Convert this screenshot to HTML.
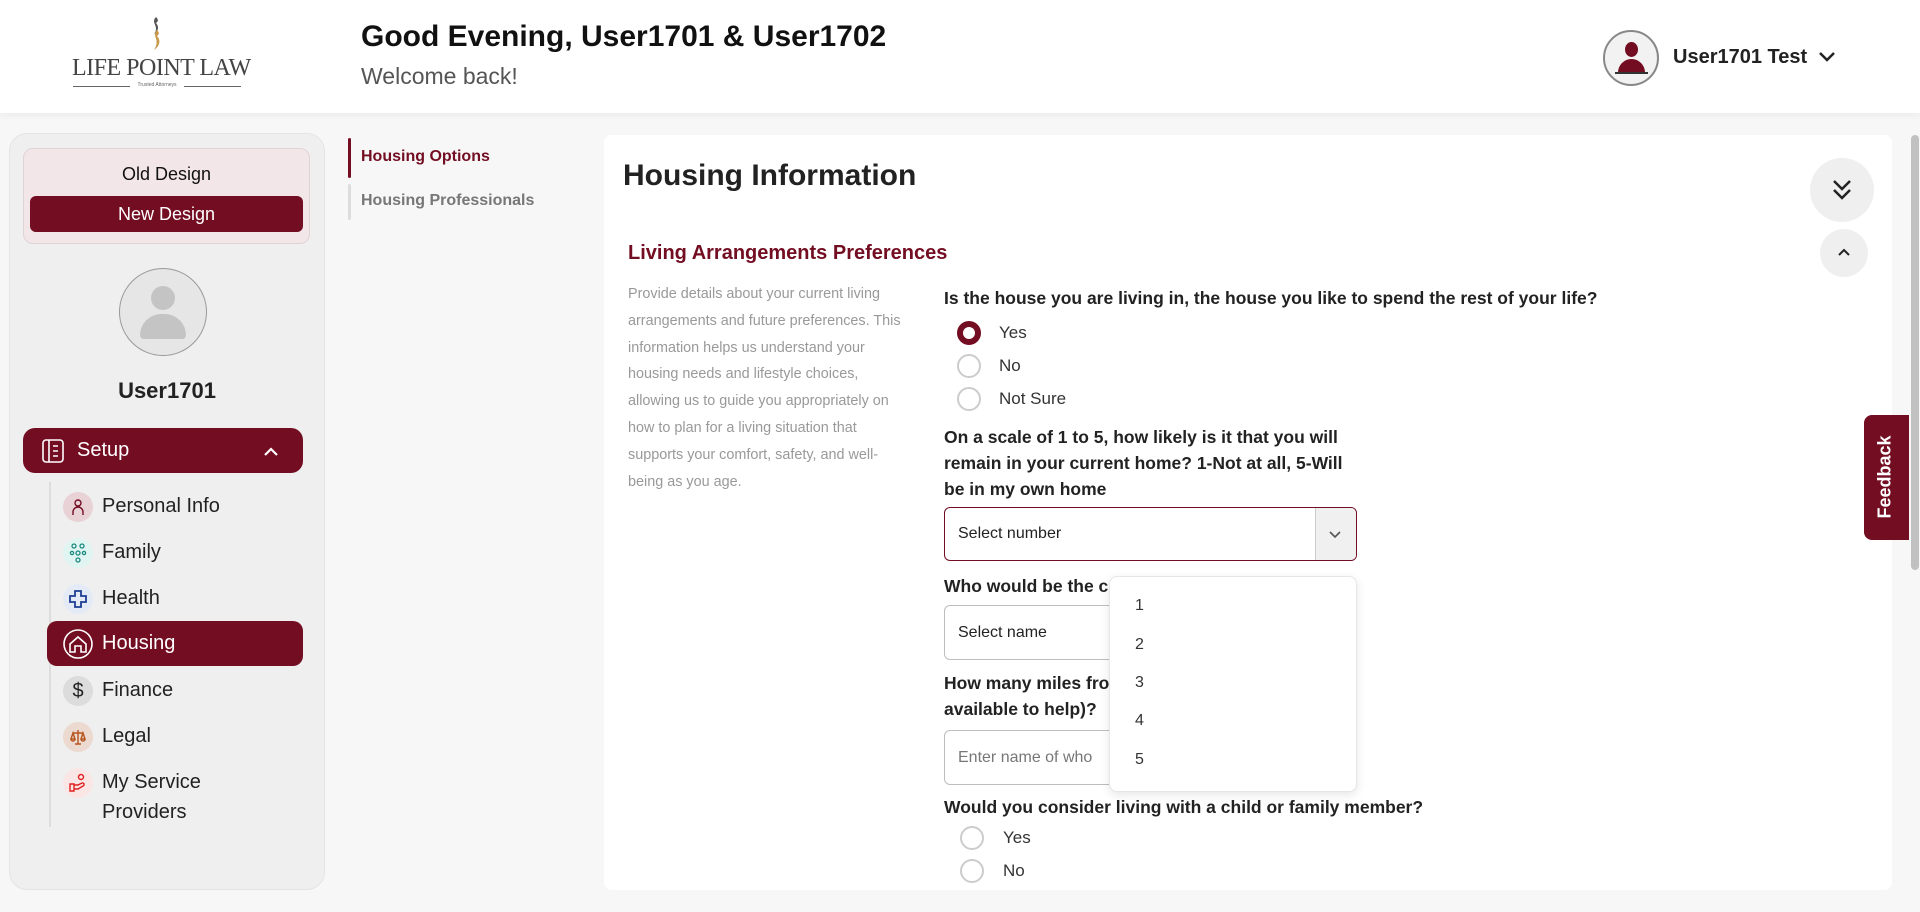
<!DOCTYPE html>
<html><head><meta charset="utf-8"><style>
*{box-sizing:border-box;margin:0;padding:0}
body{width:1920px;height:912px;overflow:hidden;background:#f7f7f7;font-family:"Liberation Sans",Arial,sans-serif;color:#222;position:relative}
.a{position:absolute}
.hdr{left:0;top:0;width:1920px;height:113px;background:#fff;box-shadow:0 2px 8px rgba(0,0,0,.06)}
.side{left:9px;top:133px;width:316px;height:757px;background:#efefef;border:1px solid #e4e4e4;border-radius:18px}
.mi{position:absolute;left:102px;font-size:20px;color:#222}
.ic{position:absolute;left:63px;width:30px;height:30px;border-radius:50%;display:flex;align-items:center;justify-content:center}
.radio{position:absolute;width:24px;height:24px;border-radius:50%;border:2px solid #ccc;background:#fff}
.lbl{position:absolute;font-size:17px;color:#333}
.q{position:absolute;left:944px;font-size:17.5px;font-weight:bold;color:#222;line-height:26px;white-space:nowrap}
.box{position:absolute;left:944px;width:413px;border:1px solid #bdbdbd;border-radius:6px;background:#fff;font-size:16px;padding-left:13px;display:flex;align-items:center}
.opt{position:absolute;left:1135px;font-size:16px;color:#333}
</style></head><body>
<div class="a hdr"></div>
<svg class="a" style="left:140px;top:16px" width="30" height="38" viewBox="0 0 30 38"><path d="M16 1c-6 6 4 9-2 17c5-3 5-8 2-11c3-2 2-4 0-6z" fill="#555"/><path d="M17 14c-6 6 4 9-3 20c6-4 7-10 3-14c3-2 2-4 0-6z" fill="#c89a4a"/></svg>
<div class="a" style="left:72px;top:55px;font-family:'Liberation Serif',serif;font-size:24px;color:#444;letter-spacing:-0.5px">LIFE POINT LAW</div>
<div class="a" style="left:73px;top:86px;width:168px;height:1px;background:#666"></div>
<div class="a" style="left:130px;top:82px;width:54px;height:8px;background:#fff;font-size:5px;color:#666;text-align:center">Trusted Attorneys</div>
<div class="a" style="left:361px;top:20px;font-size:30px;font-weight:bold;color:#111">Good Evening, User1701 &amp; User1702</div>
<div class="a" style="left:361px;top:63px;font-size:23px;color:#555">Welcome back!</div>
<div class="a" style="left:1603px;top:30px;width:56px;height:56px;border-radius:50%;border:2px solid #888;background:#f2f2f2;overflow:hidden"><div class="a" style="left:20px;top:10px;width:13px;height:15px;border-radius:50%;background:#730d22"></div><div class="a" style="left:13px;top:27px;width:27px;height:14px;border-radius:14px 14px 0 0;background:#730d22"></div><div class="a" style="left:10px;top:40px;width:33px;height:2px;background:#333"></div></div>
<div class="a" style="left:1673px;top:46px;font-size:20px;font-weight:bold;color:#222">User1701 Test</div>
<svg class="a" style="left:1817px;top:50px" width="20" height="14" viewBox="0 0 20 14"><path d="M3 3l7 7 7-7" stroke="#222" stroke-width="2.5" fill="none"/></svg>

<div class="a side"></div>
<div class="a" style="left:23px;top:148px;width:287px;height:96px;background:#f3e6e9;border:1px solid #e0d3d6;border-radius:10px"></div>
<div class="a" style="left:23px;top:164px;width:287px;text-align:center;font-size:18px;color:#111">Old Design</div>
<div class="a" style="left:30px;top:196px;width:273px;height:36px;background:#730d22;border-radius:6px;color:#fff;font-size:18px;text-align:center;line-height:36px">New Design</div>
<div class="a" style="left:119px;top:268px;width:88px;height:88px;border-radius:50%;background:#e6e6e6;border:1px solid #999"></div>
<div class="a" style="left:151px;top:286px;width:24px;height:24px;border-radius:50%;background:#c4c4c4"></div>
<div class="a" style="left:140px;top:314px;width:46px;height:25px;border-radius:23px 23px 4px 4px;background:#c4c4c4"></div>
<div class="a" style="left:9px;top:378px;width:316px;text-align:center;font-size:22px;font-weight:bold;color:#222">User1701</div>
<div class="a" style="left:23px;top:428px;width:280px;height:45px;background:#730d22;border-radius:12px"></div>
<svg class="a" style="left:41px;top:439px" width="24" height="24" viewBox="0 0 24 24"><rect x="2" y="1" width="20" height="22" rx="3" stroke="#fff" stroke-width="1.6" fill="none"/><path d="M8 1v22M12 7h5M12 12h5M12 17h5" stroke="#fff" stroke-width="1.6"/></svg>
<div class="a" style="left:77px;top:439px;font-size:20px;color:#fff">Setup</div>
<svg class="a" style="left:262px;top:445px" width="18" height="14" viewBox="0 0 18 14"><path d="M3 10l6-6 6 6" stroke="#fff" stroke-width="2.2" fill="none"/></svg>
<div class="a" style="left:49px;top:482px;width:2px;height:345px;background:#ddd"></div>
<div class="ic" style="top:492px;background:#e8d2d6"><svg width="16" height="18" viewBox="0 0 16 18"><circle cx="8" cy="5" r="3" stroke="#730d22" stroke-width="1.4" fill="none"/><path d="M3 17v-3a5 5 0 0 1 10 0v3" stroke="#730d22" stroke-width="1.4" fill="none"/></svg></div>
<div class="mi" style="top:495px">Personal Info</div>
<div class="ic" style="top:538px;background:#e0f4f2"><svg width="18" height="20" viewBox="0 0 18 20"><g stroke="#1a8a80" stroke-width="1.3" fill="none"><circle cx="5" cy="3" r="2"/><circle cx="13" cy="3" r="2"/><circle cx="9" cy="10" r="2"/><circle cx="9" cy="17" r="2"/><circle cx="3" cy="10" r="1.6"/><circle cx="15" cy="10" r="1.6"/></g></svg></div>
<div class="mi" style="top:541px">Family</div>
<div class="ic" style="top:584px;background:#e4ebf7"><svg width="20" height="20" viewBox="0 0 20 20"><path d="M7 2h6v5h5v6h-5v5H7v-5H2V7h5z" stroke="#1c3f94" stroke-width="1.8" fill="none"/></svg></div>
<div class="mi" style="top:587px">Health</div>
<div class="a" style="left:47px;top:621px;width:256px;height:45px;background:#730d22;border-radius:10px"></div>
<svg class="a" style="left:62px;top:628px" width="32" height="32" viewBox="0 0 32 32"><circle cx="16" cy="16" r="14" stroke="#fff" stroke-width="1.6" fill="none"/><path d="M8 16l8-7 8 7v8h-5v-6h-6v6H8z" stroke="#fff" stroke-width="1.6" fill="none"/></svg>
<div class="mi" style="top:632px;color:#fff">Housing</div>
<div class="ic" style="top:676px;background:#dcdcdc;font-size:20px;color:#222">$</div>
<div class="mi" style="top:679px">Finance</div>
<div class="ic" style="top:722px;background:#ecd9cf"><svg width="18" height="18" viewBox="0 0 18 18"><g stroke="#b5531d" stroke-width="1.4" fill="none"><path d="M9 2v14M4 5h10M2 11l2-6 2 6zM12 11l2-6 2 6zM2 11a2 2 0 0 0 4 0M12 11a2 2 0 0 0 4 0M6 16h6"/></g></svg></div>
<div class="mi" style="top:725px">Legal</div>
<div class="ic" style="top:768px;background:#fbe6e6"><svg width="20" height="20" viewBox="0 0 20 20"><g stroke="#e02020" stroke-width="1.4" fill="none"><circle cx="13" cy="4" r="2.5"/><path d="M2 11h4v7H2zM6 12h4l4-2a1.5 1.5 0 0 1 1 3l-5 3H6"/></g></svg></div>
<div class="mi" style="top:771px">My Service</div>
<div class="mi" style="top:801px">Providers</div>

<div class="a" style="left:348px;top:138px;width:3px;height:40px;background:#730d22;border-radius:2px"></div>
<div class="a" style="left:361px;top:148px;font-size:16px;font-weight:bold;color:#730d22">Housing Options</div>
<div class="a" style="left:348px;top:184px;width:3px;height:36px;background:#ddd;border-radius:2px"></div>
<div class="a" style="left:361px;top:192px;font-size:16px;font-weight:bold;color:#777">Housing Professionals</div>

<div class="a" style="left:604px;top:135px;width:1288px;height:755px;background:#fff;border-radius:8px"></div>
<div class="a" style="left:623px;top:159px;font-size:30px;font-weight:bold;color:#222">Housing Information</div>
<div class="a" style="left:1810px;top:158px;width:64px;height:64px;border-radius:50%;background:#efefef"></div>
<svg class="a" style="left:1830px;top:176px" width="24" height="28" viewBox="0 0 24 28"><path d="M4 5l8 8 8-8M4 14l8 8 8-8" stroke="#222" stroke-width="2.5" fill="none"/></svg>
<div class="a" style="left:1820px;top:229px;width:48px;height:48px;border-radius:50%;background:#efefef"></div>
<svg class="a" style="left:1836px;top:246px" width="16" height="12" viewBox="0 0 16 12"><path d="M3 9l5-5 5 5" stroke="#222" stroke-width="2" fill="none"/></svg>
<div class="a" style="left:628px;top:242px;font-size:20px;font-weight:bold;color:#730d22">Living Arrangements Preferences</div>
<div class="a" style="left:628px;top:281px;font-size:14.4px;line-height:26.8px;color:#999;white-space:nowrap">Provide details about your current living<br>arrangements and future preferences. This<br>information helps us understand your<br>housing needs and lifestyle choices,<br>allowing us to guide you appropriately on<br>how to plan for a living situation that<br>supports your comfort, safety, and well-<br>being as you age.</div>

<div class="q" style="top:285px">Is the house you are living in, the house you like to spend the rest of your life?</div>
<div class="radio" style="left:957px;top:321px;border:6px solid #730d22"></div>
<div class="lbl" style="left:999px;top:323px">Yes</div>
<div class="radio" style="left:957px;top:354px"></div>
<div class="lbl" style="left:999px;top:356px">No</div>
<div class="radio" style="left:957px;top:387px"></div>
<div class="lbl" style="left:999px;top:389px">Not Sure</div>
<div class="q" style="top:424px">On a scale of 1 to 5, how likely is it that you will<br>remain in your current home? 1-Not at all, 5-Will<br>be in my own home</div>
<div class="box" style="top:507px;height:54px;border-color:#730d22">Select number</div>
<div class="a" style="left:1315px;top:508px;width:41px;height:52px;background:#f0f0f0;border-left:1px solid #ccc;border-radius:0 5px 5px 0"></div>
<svg class="a" style="left:1327px;top:529px" width="16" height="12" viewBox="0 0 16 12"><path d="M3 3l5 5 5-5" stroke="#555" stroke-width="1.6" fill="none"/></svg>
<div class="q" style="top:573px">Who would be the c</div>
<div class="box" style="top:605px;height:55px">Select name</div>
<div class="q" style="top:670px">How many miles fro<br>available to help)?</div>
<div class="box" style="top:730px;height:55px;color:#777">Enter name of who</div>
<div class="q" style="top:794px">Would you consider living with a child or family member?</div>
<div class="radio" style="left:960px;top:826px"></div>
<div class="lbl" style="left:1003px;top:828px">Yes</div>
<div class="radio" style="left:960px;top:859px"></div>
<div class="lbl" style="left:1003px;top:861px">No</div>

<div class="a" style="left:1109px;top:576px;width:248px;height:216px;background:#fff;border:1px solid #e6e6e6;border-radius:8px;box-shadow:0 3px 10px rgba(0,0,0,.1)"></div>
<div class="opt" style="top:597px">1</div>
<div class="opt" style="top:636px">2</div>
<div class="opt" style="top:674px">3</div>
<div class="opt" style="top:712px">4</div>
<div class="opt" style="top:751px">5</div>

<div class="a" style="left:1864px;top:415px;width:45px;height:125px;background:#730d22;border-radius:8px 0 0 8px"></div>
<div class="a" style="left:1824px;top:465px;width:125px;height:24px;transform:rotate(-90deg);color:#fff;font-size:18px;font-weight:bold;text-align:center">Feedback</div>
<div class="a" style="left:1911px;top:135px;width:8px;height:435px;background:#c1c1c1;border-radius:4px"></div>
</body></html>
